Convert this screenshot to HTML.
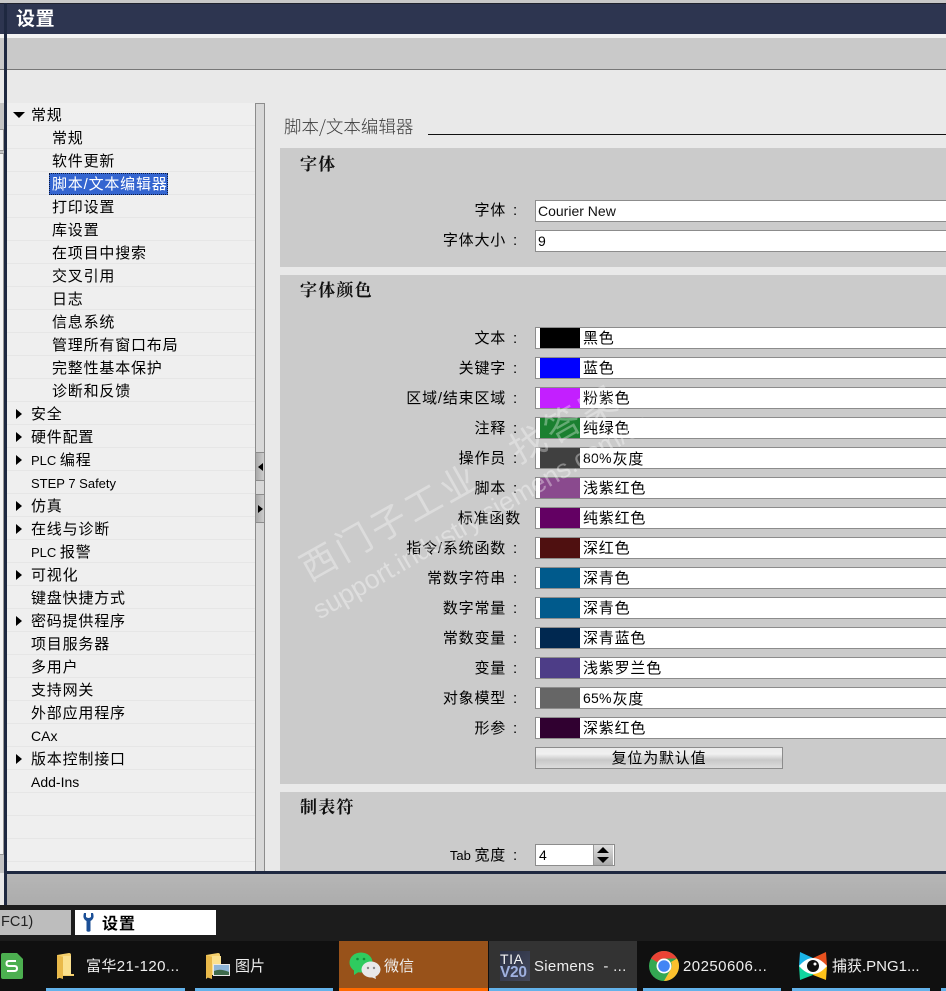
<!DOCTYPE html>
<html lang="zh">
<head>
<meta charset="utf-8">
<title>设置</title>
<style>
html,body{margin:0;padding:0;background:#1c1c1c}
#p{position:relative;width:946px;height:991px;overflow:hidden;font-family:"Liberation Sans","WenQuanYi Zen Hei","Noto Sans CJK SC",sans-serif;font-size:14px;color:#000}
#p div,#p span.a{position:absolute}
.r{left:7px;width:248px;height:22px;border-bottom:1px solid #e6e6e6;line-height:23px;white-space:nowrap;font-size:15px;letter-spacing:.8px}
.r span{position:absolute;top:1px}
.l0 span{left:24px}
.l1 span{left:45px}
.ar{position:absolute;left:9px;top:7px;width:0;height:0;border-top:5px solid transparent;border-bottom:5px solid transparent;border-left:6px solid #000}
em{font-style:normal;font-size:13px;letter-spacing:0;word-spacing:0}
.lb{left:280px;width:238px;text-align:right;height:24px;line-height:24px;white-space:nowrap;font-size:15px;letter-spacing:.8px;word-spacing:2px}
.in{left:535px;width:420px;height:20px;background:#fff;border:1px solid #8c8c8c;line-height:20px;white-space:nowrap}
.in span{position:absolute;left:2px;top:0}
.sw{left:4px;top:0;width:40px;height:20px}
.c span{left:47px;top:1px;font-size:15px;letter-spacing:.8px}
.c span em{font-size:14px;letter-spacing:.2px;margin-right:1px;position:relative;top:-1px}
.sec{left:280px;width:666px;background:#cbcbcb}
.h{left:300px;font-family:"Noto Serif CJK SC","Noto Sans CJK SC",serif;font-weight:700;font-size:17px;line-height:22px;letter-spacing:1.2px;white-space:nowrap;color:#111}
.tb{top:955px;color:#eee;font-size:15px;line-height:24px;white-space:nowrap}
.u{top:988px;height:3px;background:#63b2ea}
</style>
</head>
<body>
<div id="p">
<!-- window chrome -->
<div style="left:0;top:0;width:946px;height:3px;background:#c8c8c8"></div>
<div style="left:0;top:3px;width:946px;height:31px;background:#2d3550;border-top:1px solid #20232e;box-sizing:border-box"></div>
<div style="left:16px;top:6px;color:#fff;font-size:19px;font-weight:700;line-height:24px;letter-spacing:.5px;font-family:'Noto Sans CJK SC',sans-serif">设置</div>
<div style="left:0;top:34px;width:946px;height:4px;background:#f2f2f2"></div>
<div style="left:0;top:38px;width:946px;height:31px;background:#c9c9c9"></div>
<div style="left:0;top:69px;width:946px;height:1px;background:#777"></div>
<div style="left:0;top:70px;width:946px;height:801px;background:#e9e9e9"></div>

<!-- left edge -->
<div style="left:0;top:103px;width:4px;height:770px;background:#c4c4c4"></div>
<div style="left:0;top:129px;width:3px;height:20px;background:#f4f4f4;border:solid #999;border-width:1px 1px 1px 0"></div>
<div style="left:0;top:153px;width:3px;height:700px;background:#f4f4f4;border:solid #999;border-width:1px 1px 1px 0"></div>
<div style="left:4px;top:3px;width:3px;height:902px;background:#1e2840"></div>
<div style="left:0;top:873px;width:4px;height:32px;background:#e8e8e8"></div>

<!-- tree -->
<div style="left:7px;top:103px;width:248px;height:768px;background:#efefef"></div>
<div class="r l0" style="top:103px"><i class="ar" style="left:6px;top:9px;border-left:6px solid transparent;border-right:6px solid transparent;border-top:6px solid #000;border-bottom:0"></i><span>常规</span></div>
<div class="r l1" style="top:126px"><span>常规</span></div>
<div class="r l1" style="top:149px"><span>软件更新</span></div>
<div class="r l1" style="top:172px"></div>
<div style="left:49px;top:173px;width:117px;height:20px;background:#3465d0;border:1px dotted #0a1a40"></div>
<div style="left:52px;top:173px;color:#fff;line-height:23px;font-size:15px;letter-spacing:.8px;white-space:nowrap">脚本/文本编辑器</div>
<div class="r l1" style="top:195px"><span>打印设置</span></div>
<div class="r l1" style="top:218px"><span>库设置</span></div>
<div class="r l1" style="top:241px"><span>在项目中搜索</span></div>
<div class="r l1" style="top:264px"><span>交叉引用</span></div>
<div class="r l1" style="top:287px"><span>日志</span></div>
<div class="r l1" style="top:310px"><span>信息系统</span></div>
<div class="r l1" style="top:333px"><span>管理所有窗口布局</span></div>
<div class="r l1" style="top:356px"><span>完整性基本保护</span></div>
<div class="r l1" style="top:379px"><span>诊断和反馈</span></div>
<div class="r l0" style="top:402px"><i class="ar"></i><span>安全</span></div>
<div class="r l0" style="top:425px"><i class="ar"></i><span>硬件配置</span></div>
<div class="r l0" style="top:448px"><i class="ar"></i><span><em>PLC </em>编程</span></div>
<div class="r l0" style="top:471px"><span><em>STEP 7 Safety</em></span></div>
<div class="r l0" style="top:494px"><i class="ar"></i><span>仿真</span></div>
<div class="r l0" style="top:517px"><i class="ar"></i><span>在线与诊断</span></div>
<div class="r l0" style="top:540px"><span><em>PLC </em>报警</span></div>
<div class="r l0" style="top:563px"><i class="ar"></i><span>可视化</span></div>
<div class="r l0" style="top:586px"><span>键盘快捷方式</span></div>
<div class="r l0" style="top:609px"><i class="ar"></i><span>密码提供程序</span></div>
<div class="r l0" style="top:632px"><span>项目服务器</span></div>
<div class="r l0" style="top:655px"><span>多用户</span></div>
<div class="r l0" style="top:678px"><span>支持网关</span></div>
<div class="r l0" style="top:701px"><span>外部应用程序</span></div>
<div class="r l0" style="top:724px"><span><em style="font-size:14px">CAx</em></span></div>
<div class="r l0" style="top:747px"><i class="ar"></i><span>版本控制接口</span></div>
<div class="r l0" style="top:770px"><span><em style="font-size:14px">Add-Ins</em></span></div>
<div class="r l0" style="top:793px"></div>
<div class="r l0" style="top:816px"></div>
<div class="r l0" style="top:839px"></div>

<!-- splitter -->
<div style="left:255px;top:103px;width:8px;height:768px;background:#d8d8d8;border:solid #8c8c8c;border-width:1px;border-bottom:0"></div>
<div style="left:256px;top:452px;width:8px;height:27px;background:linear-gradient(90deg,#aaa,#ccc);border-top:1px solid #8c8c8c;border-bottom:1px solid #8c8c8c"></div>
<div style="left:256px;top:494px;width:8px;height:27px;background:linear-gradient(90deg,#aaa,#ccc);border-top:1px solid #8c8c8c;border-bottom:1px solid #8c8c8c"></div>
<div style="left:258px;top:463px;width:0;height:0;border-top:4px solid transparent;border-bottom:4px solid transparent;border-right:5px solid #000"></div>
<div style="left:258px;top:505px;width:0;height:0;border-top:4px solid transparent;border-bottom:4px solid transparent;border-left:5px solid #000"></div>

<!-- heading -->
<div style="left:284px;top:115px;font-size:17.500px;line-height:24px;color:#3c3c3c;white-space:nowrap;font-family:'Noto Sans CJK SC',sans-serif;font-weight:300">脚本/文本编辑器</div>
<div style="left:428px;top:134px;width:518px;height:1px;background:#111"></div>

<!-- sections -->
<div class="sec" style="top:148px;height:119px"></div>
<div class="sec" style="top:275px;height:509px"></div>
<div class="sec" style="top:792px;height:79px"></div>

<div class="h" style="top:152px">字体</div>
<div class="lb" style="top:199px">字体 :</div>
<div class="in" style="top:200px"><span style="color:#111">Courier New</span></div>
<div class="lb" style="top:229px">字体大小 :</div>
<div class="in" style="top:230px"><span>9</span></div>

<div class="h" style="top:278px">字体颜色</div>

<div class="lb" style="top:327px">文本 :</div>
<div class="in c" style="top:327px"><div class="sw" style="background:#000"></div><span>黑色</span></div>
<div class="lb" style="top:357px">关键字 :</div>
<div class="in c" style="top:357px"><div class="sw" style="background:#0000ff"></div><span>蓝色</span></div>
<div class="lb" style="top:387px">区域/结束区域 :</div>
<div class="in c" style="top:387px"><div class="sw" style="background:#c31fff"></div><span>粉紫色</span></div>
<div class="lb" style="top:417px">注释 :</div>
<div class="in c" style="top:417px"><div class="sw" style="background:#1a8030"></div><span>纯绿色</span></div>
<div class="lb" style="top:447px">操作员 :</div>
<div class="in c" style="top:447px"><div class="sw" style="background:#404040"></div><span><em>80%</em>灰度</span></div>
<div class="lb" style="top:477px">脚本 :</div>
<div class="in c" style="top:477px"><div class="sw" style="background:#8a4a8e"></div><span>浅紫红色</span></div>
<div class="lb" style="top:507px;width:241px">标准函数</div>
<div class="in c" style="top:507px"><div class="sw" style="background:#630063"></div><span>纯紫红色</span></div>
<div class="lb" style="top:537px">指令/系统函数 :</div>
<div class="in c" style="top:537px"><div class="sw" style="background:#4f1010"></div><span>深红色</span></div>
<div class="lb" style="top:567px">常数字符串 :</div>
<div class="in c" style="top:567px"><div class="sw" style="background:#005a8c"></div><span>深青色</span></div>
<div class="lb" style="top:597px">数字常量 :</div>
<div class="in c" style="top:597px"><div class="sw" style="background:#005a8c"></div><span>深青色</span></div>
<div class="lb" style="top:627px">常数变量 :</div>
<div class="in c" style="top:627px"><div class="sw" style="background:#002850"></div><span>深青蓝色</span></div>
<div class="lb" style="top:657px">变量 :</div>
<div class="in c" style="top:657px"><div class="sw" style="background:#4d3d87"></div><span>浅紫罗兰色</span></div>
<div class="lb" style="top:687px">对象模型 :</div>
<div class="in c" style="top:687px"><div class="sw" style="background:#666"></div><span><em>65%</em>灰度</span></div>
<div class="lb" style="top:717px">形参 :</div>
<div class="in c" style="top:717px"><div class="sw" style="background:#300030"></div><span>深紫红色</span></div>

<div style="left:535px;top:747px;width:246px;height:20px;border:1px solid #8c8c8c;background:linear-gradient(#ececec 0,#f0f0f0 30%,#c8c8c8 60%,#dcdcdc 100%);text-align:center;line-height:21px;font-size:15px;letter-spacing:.8px">复位为默认值</div>

<div class="h" style="top:795px">制表符</div>
<div class="lb" style="top:844px"><em>Tab </em>宽度 :</div>
<div class="in" style="top:844px;width:78px"><span style="left:3px">4</span></div>
<div style="left:593px;top:845px;width:19px;height:20px;background:linear-gradient(#ddd,#aaa);border-left:1px solid #999"></div>
<div style="left:597px;top:847px;width:0;height:0;border-left:6px solid transparent;border-right:6px solid transparent;border-bottom:6px solid #000"></div>
<div style="left:597px;top:857px;width:0;height:0;border-left:6px solid transparent;border-right:6px solid transparent;border-top:6px solid #000"></div>

<!-- watermark -->
<div style="left:302px;top:547px;color:rgba(255,255,255,.33);font-size:36px;line-height:44px;white-space:nowrap;transform:rotate(-29.400deg);transform-origin:0 50%;letter-spacing:4px;font-family:'Noto Sans CJK SC',sans-serif;font-weight:400">西门子工业　找答案</div>
<div style="left:315px;top:597px;color:rgba(255,255,255,.36);font-size:26.500px;line-height:30px;white-space:nowrap;transform:rotate(-30deg);transform-origin:0 50%">support.industry.siemens.com/cs</div>

<!-- bottom -->
<div style="left:7px;top:871px;width:939px;height:3px;background:#1e2840"></div>
<div style="left:7px;top:874px;width:939px;height:31px;background:linear-gradient(#b6b6b6,#acacac)"></div>
<div style="left:0;top:905px;width:946px;height:36px;background:#1c1c1c"></div>
<div style="left:0;top:910px;width:70px;height:25px;padding-left:1px;background:#bdbdbd;line-height:25px;font-size:14.500px;color:#222;white-space:nowrap">FC1)</div>
<div style="left:75px;top:910px;width:141px;height:25px;background:#fff"></div>
<svg style="position:absolute;left:83px;top:913px" width="11" height="19" viewBox="0 0 11 19"><path d="M1 0 C0 3 0 6 3.500 8 L3.500 18 Q5.500 19.500 7.500 18 L7.500 8 C11 6 11 3 10 0 L8 0 L8 4 Q5.500 6 3 4 L3 0 Z" fill="#1b4f96"/></svg>
<div style="left:102px;top:910px;font-size:16px;font-weight:700;line-height:25px;letter-spacing:1px;font-family:'Noto Sans CJK SC',sans-serif">设置</div>

<!-- taskbar -->
<div style="left:0;top:941px;width:946px;height:50px;background:#101010"></div>
<div style="left:339px;top:941px;width:149px;height:47px;background:#98521a"></div>
<div style="left:339px;top:988px;width:149px;height:3px;background:#ff6a00"></div>
<div style="left:489px;top:941px;width:148px;height:47px;background:#333"></div>
<div class="u" style="left:46px;width:139px"></div>
<div class="u" style="left:195px;width:138px"></div>
<div class="u" style="left:489px;width:148px"></div>
<div class="u" style="left:643px;width:138px"></div>
<div class="u" style="left:792px;width:138px"></div>
<div class="u" style="left:941px;width:5px"></div>

<!-- wps s -->
<svg style="position:absolute;left:0;top:952px" width="24" height="28" viewBox="0 0 24 28"><path d="M3 1 H17 L23 7 V25 Q23 27 21 27 H3 Q1 27 1 25 V3 Q1 1 3 1Z" fill="#4caf50"/><path d="M16 9 H9 Q6.500 9 6.500 11.500 Q6.500 14 9 14 H14.500 Q17 14 17 16.500 Q17 19 14.500 19 H7" fill="none" stroke="#fff" stroke-width="2"/></svg>
<!-- folder 1 -->
<svg style="position:absolute;left:56px;top:953px" width="20" height="27" viewBox="0 0 20 27"><path d="M1 2 L13 0 Q15 0 15 2 V21 H18 V23 H7 L1 26 Z" fill="#f5cf6b"/><path d="M1 2 L7 4 V26 L1 24Z" fill="#e9b94a"/><path d="M7 3 H15 V22 H7Z" fill="#fbe08e"/></svg>
<div class="tb" style="left:86px;letter-spacing:.4px">富华21-120...</div>
<!-- folder 2 -->
<svg style="position:absolute;left:205px;top:953px" width="26" height="27" viewBox="0 0 26 27"><path d="M1 2 L13 0 Q15 0 15 2 V21 H7 L1 26 Z" fill="#f5cf6b"/><path d="M1 2 L7 4 V26 L1 24Z" fill="#e9b94a"/><path d="M7 3 H16 V22 H7Z" fill="#fbe08e"/><rect x="8" y="11" width="17" height="12" fill="#e8e8e8"/><rect x="9" y="12" width="15" height="10" fill="#8fb6d8"/><path d="M9 22 V18 Q15 15 24 19 V22Z" fill="#3e6a4c"/></svg>
<div class="tb" style="left:235px">图片</div>
<!-- wechat -->
<svg style="position:absolute;left:349px;top:952px" width="32" height="27" viewBox="0 0 32 27"><ellipse cx="12" cy="10.500" rx="11.500" ry="10" fill="#2fcb5f"/><path d="M5 17 L5 23 L11 19Z" fill="#2fcb5f"/><ellipse cx="22" cy="17.500" rx="9.500" ry="8" fill="#e8e8e8"/><path d="M26 23 L27 27 L22 25Z" fill="#e8e8e8"/><circle cx="8.500" cy="7" r="1.300" fill="#0f8f3a"/><circle cx="15" cy="7" r="1.300" fill="#0f8f3a"/><circle cx="19" cy="16" r="1.200" fill="#888"/><circle cx="25" cy="16" r="1.200" fill="#888"/></svg>
<div class="tb" style="left:384px">微信</div>
<!-- TIA -->
<div style="left:500px;top:951px;width:30px;height:30px;background:linear-gradient(135deg,#2a3045,#454a5c)"></div>
<div style="left:500px;top:952px;color:#f4f4f4;font-size:14px;font-weight:400;line-height:14px;letter-spacing:.6px">TIA</div>
<div style="left:500px;top:965px;color:#9fb1e0;font-size:15.500px;font-weight:700;line-height:15px;letter-spacing:-.3px">V20</div>
<div class="tb" style="left:534px;letter-spacing:.3px">Siemens &nbsp;- ...</div>
<!-- chrome -->
<svg style="position:absolute;left:649px;top:951px" width="30" height="30" viewBox="0 0 30 30"><circle cx="15" cy="15" r="15" fill="#34a853"/><path d="M15 0 A15 15 0 0 1 28 7.500 H15 A7.500 7.500 0 0 0 8.500 11.200 L2 7.500 A15 15 0 0 1 15 0Z" fill="#ea4335"/><path d="M28 7.500 A15 15 0 0 1 15 30 L21.500 18.700 A7.500 7.500 0 0 0 22 11 Z" fill="#fbc02d"/><circle cx="15" cy="15" r="7.500" fill="#fff"/><circle cx="15" cy="15" r="5.800" fill="#4285f4"/></svg>
<div class="tb" style="left:683px;letter-spacing:.45px">20250606...</div>
<!-- capture -->
<svg style="position:absolute;left:799px;top:951px" width="28" height="30" viewBox="0 0 28 30"><path d="M1 1 L14 7 L14 15 L0 15Z" fill="#1bb5e8"/><path d="M27 1 L14 7 L14 15 L28 15Z" fill="#e8521f"/><path d="M0 15 L1 29 L14 24 V15Z" fill="#12d6a0"/><path d="M28 15 L27 29 L14 24 V15Z" fill="#fdc21a"/><path d="M0 15 Q14 -1 28 15 Q14 31 0 15Z" fill="#fff"/><circle cx="14" cy="15" r="6" fill="#111"/><circle cx="16" cy="13" r="1.500" fill="#fff"/></svg>
<div class="tb" style="left:832px">捕获.PNG1...</div>
</div>
</body>
</html>
